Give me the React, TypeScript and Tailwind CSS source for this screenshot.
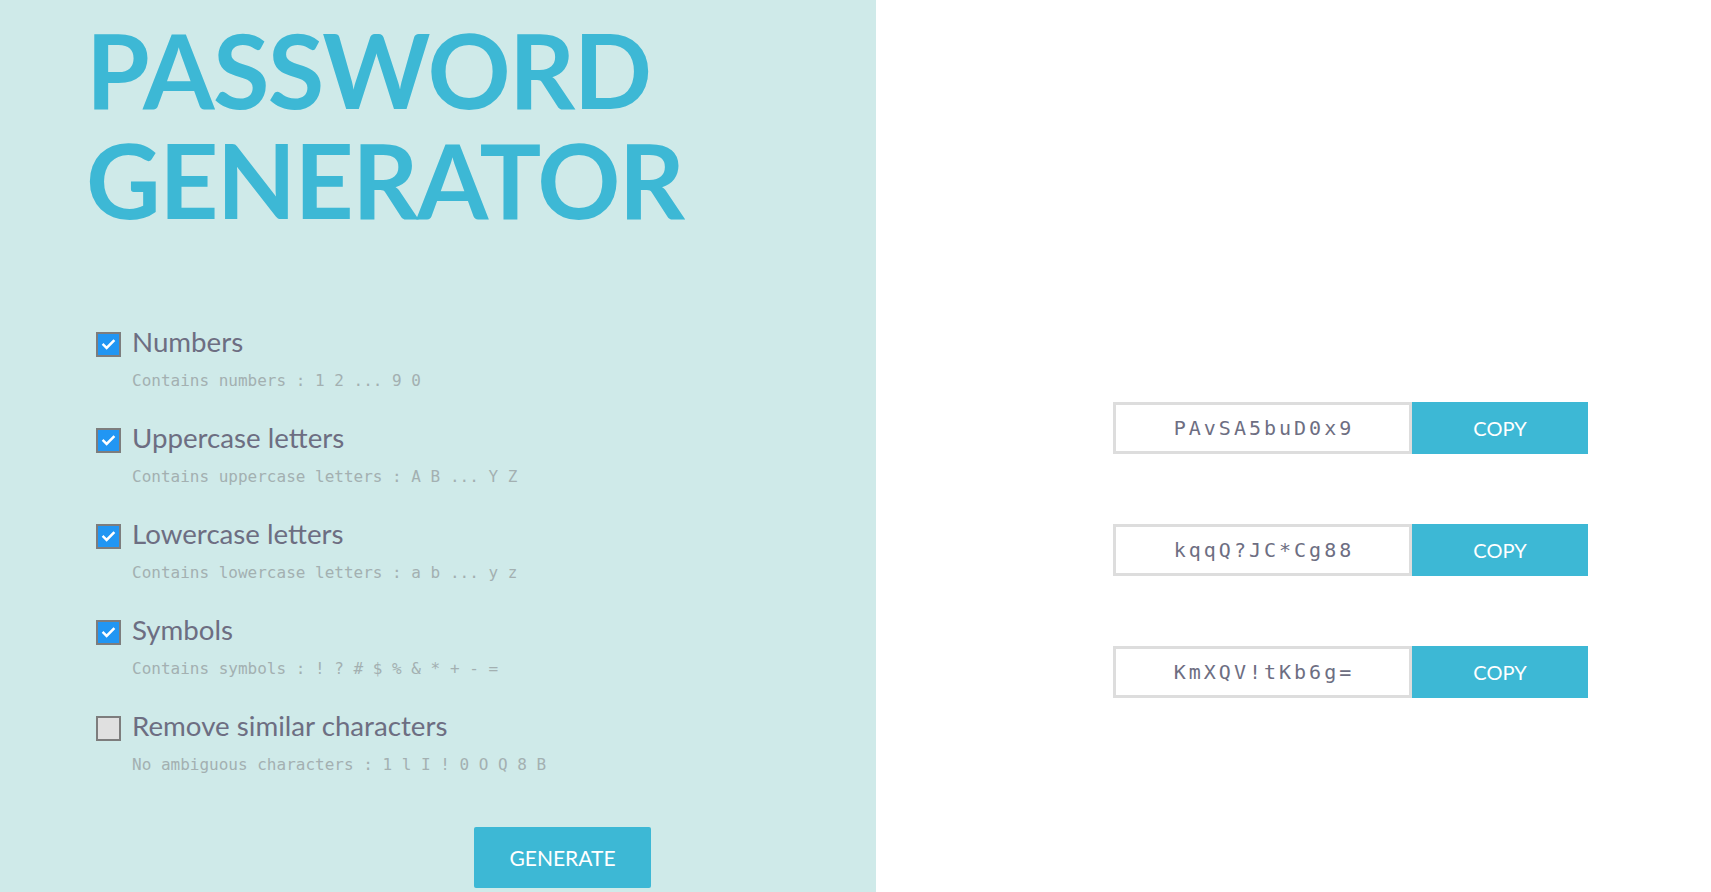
import React, { useState } from 'react'

type Option = {
  key: string
  label: string
  hint: string
}

const OPTIONS: Option[] = [
  { key: 'numbers', label: 'Numbers', hint: 'Contains numbers : 1 2 ... 9 0' },
  { key: 'upper', label: 'Uppercase letters', hint: 'Contains uppercase letters : A B ... Y Z' },
  { key: 'lower', label: 'Lowercase letters', hint: 'Contains lowercase letters : a b ... y z' },
  { key: 'symbols', label: 'Symbols', hint: 'Contains symbols : ! ? # $ % & * + - =' },
  { key: 'similar', label: 'Remove similar characters', hint: 'No ambiguous characters : 1 l I ! 0 O Q 8 B' },
]

const PASSWORDS = ['PAvSA5buD0x9', 'kqqQ?JC*Cg88', 'KmXQV!tKb6g=']

function CheckBox({ checked, onToggle }: { checked: boolean; onToggle: () => void }) {
  return (
    <button
      type="button"
      onClick={onToggle}
      className={`mt-[6px] flex h-[25px] w-[25px] shrink-0 items-center justify-center border-2 border-[#7d7d7d] ${
        checked ? 'bg-[#2196f3]' : 'bg-[#e0e0e0]'
      }`}>
      {checked && (
        <svg width="15" height="15" viewBox="0 0 24 24" fill="none">
          <path
            d="M4 12.5l5 5L20 6.5"
            stroke="white"
            strokeWidth="4"
            strokeLinecap="square"
          />
        </svg>
      )}
    </button>
  )
}

export default function App() {
  const [state, setState] = useState<Record<string, boolean>>({
    numbers: true,
    upper: true,
    lower: true,
    symbols: true,
    similar: false,
  })

  return (
    <div className="flex min-h-[892px] w-full font-['Lato',sans-serif]">
      <div className="flex w-[876px] shrink-0 flex-col bg-[#cfeae9] pt-[14px]">
        <h1 className="pl-[86px] text-[103px] font-bold leading-[110px] tracking-[-1.6px] text-[#3db8d5]">
          <div>PASSWORD</div>
          <div>GENERATOR</div>
        </h1>

        <div className="mt-[92px] flex flex-col gap-[31px] pl-[96px]">
          {OPTIONS.map((opt) => (
            <div key={opt.key} className="flex flex-col">
              <div className="flex items-start gap-[11px]">
                <CheckBox
                  checked={state[opt.key]}
                  onToggle={() => setState({ ...state, [opt.key]: !state[opt.key] })}
                />
                <span className="text-[27.7px] leading-[32px] text-[#6d6e82]">{opt.label}</span>
              </div>
              <p className="mt-[13px] pl-[36px] font-['DejaVu_Sans_Mono',monospace] text-[16px] leading-[20px] text-[#a3b0b1]">
                {opt.hint}
              </p>
            </div>
          ))}
        </div>

        <button
          type="button"
          className="ml-[474px] mt-[52px] h-[61px] w-[177px] rounded-[2px] bg-[#3db8d5] text-[21px] text-white">
          GENERATE
        </button>
      </div>

      <div className="flex flex-1 flex-col gap-[70px] bg-white pl-[237px] pt-[402px]">
        {PASSWORDS.map((pw) => (
          <div key={pw} className="flex">
            <div className="flex h-[52px] w-[299px] items-center justify-center border-[3px] border-[#dddddd] bg-white pl-[3px] font-['DejaVu_Sans_Mono',monospace] text-[20px] tracking-[3px] text-[#6d6e82]">
              {pw}
            </div>
            <button
              type="button"
              className="h-[52px] w-[176px] bg-[#3db8d5] text-[20px] text-white">
              COPY
            </button>
          </div>
        ))}
      </div>
    </div>
  )
}
